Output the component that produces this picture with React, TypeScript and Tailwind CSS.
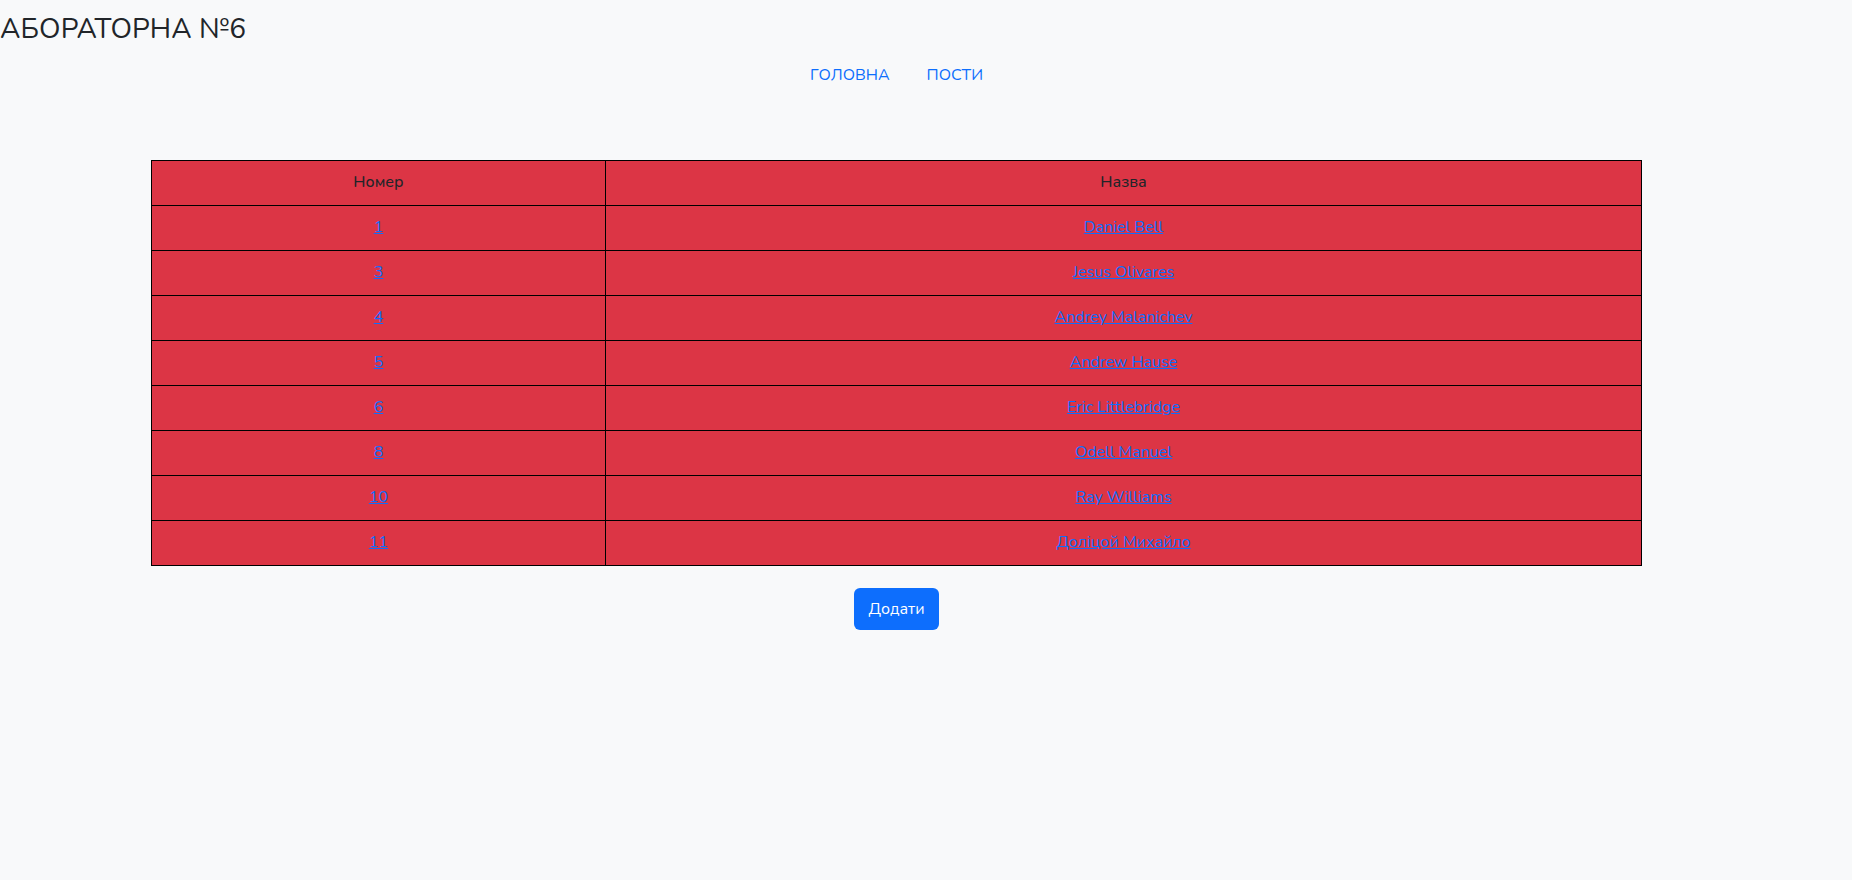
import React from "react";

const rows: [string, string][] = [
  ["1", "Daniel Bell"],
  ["3", "Jesus Olivares"],
  ["4", "Andrey Malanichev"],
  ["5", "Andrew Hause"],
  ["6", "Eric Littlebridge"],
  ["8", "Odell Manuel"],
  ["10", "Ray Williams"],
  ["11", "Доліцой Михайло"],
];

export default function App() {
  return (
    <div
      className="min-h-[880px] w-full bg-[#f8f9fa] text-[#212529] text-[16px]"
      style={{ fontFamily: "Nunito, 'Open Sans', 'Noto Sans', sans-serif" }}
    >
      <h1 className="m-0 pt-[12px] text-[28px] leading-[34px] font-normal tracking-[0.1px]">
        АБОРАТОРНА №6
      </h1>
      <div className="ml-[151px] w-[1491px]">
        <nav className="flex justify-center gap-[37px] pt-[17px] text-[16px] leading-[24px] text-[#0d6efd]">
          <a href="#" className="no-underline">ГОЛОВНА</a>
          <a href="#" className="no-underline">ПОСТИ</a>
        </nav>
        <table className="mt-[73px] w-full border-collapse bg-[#dc3545] text-center">
          <thead>
            <tr>
              <th className="h-[45px] w-[454px] border border-black p-0 pb-[2px] font-medium text-[#212529]">Номер</th>
              <th className="h-[45px] border border-black p-0 pb-[2px] font-medium text-[#212529]">Назва</th>
            </tr>
          </thead>
          <tbody>
            {rows.map(([n, name]) => (
              <tr key={n}>
                <td className="h-[45px] border border-black p-0 pb-[2px]">
                  <a href="#" className="text-[#0d6efd] underline">{n}</a>
                </td>
                <td className="h-[45px] border border-black p-0 pb-[2px]">
                  <a href="#" className="text-[#0d6efd] underline">{name}</a>
                </td>
              </tr>
            ))}
          </tbody>
        </table>
        <div className="mt-[22px] flex justify-center">
          <button className="h-[42px] rounded-[6px] bg-[#0d6efd] px-[14px] text-[16px] text-white">
            Додати
          </button>
        </div>
      </div>
    </div>
  );
}
